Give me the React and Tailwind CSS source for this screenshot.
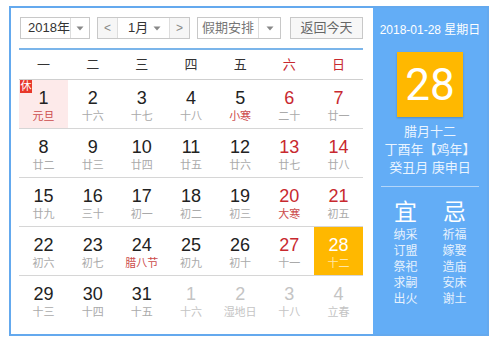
import React from "react";

const rows = [
  [
    { d: 1, l: "元旦", hol: true, rest: true },
    { d: 2, l: "十六" },
    { d: 3, l: "十七" },
    { d: 4, l: "十八" },
    { d: 5, l: "小寒", hol: true },
    { d: 6, l: "二十", we: true },
    { d: 7, l: "廿一", we: true },
  ],
  [
    { d: 8, l: "廿二" },
    { d: 9, l: "廿三" },
    { d: 10, l: "廿四" },
    { d: 11, l: "廿五" },
    { d: 12, l: "廿六" },
    { d: 13, l: "廿七", we: true },
    { d: 14, l: "廿八", we: true },
  ],
  [
    { d: 15, l: "廿九" },
    { d: 16, l: "三十" },
    { d: 17, l: "初一" },
    { d: 18, l: "初二" },
    { d: 19, l: "初三" },
    { d: 20, l: "大寒", we: true, hol: true },
    { d: 21, l: "初五", we: true },
  ],
  [
    { d: 22, l: "初六" },
    { d: 23, l: "初七" },
    { d: 24, l: "腊八节", hol: true },
    { d: 25, l: "初九" },
    { d: 26, l: "初十" },
    { d: 27, l: "十一", we: true },
    { d: 28, l: "十二", sel: true },
  ],
  [
    { d: 29, l: "十三" },
    { d: 30, l: "十四" },
    { d: 31, l: "十五" },
    { d: 1, l: "十六", other: true },
    { d: 2, l: "湿地日", other: true },
    { d: 3, l: "十八", other: true },
    { d: 4, l: "立春", other: true },
  ],
];

const weekdays = ["一", "二", "三", "四", "五", "六", "日"];

function Arrow() {
  return (
    <svg width="8" height="5" viewBox="0 0 8 5">
      <path d="M0.5 0.5 L7.5 0.5 L4 4.5 Z" fill="#888" />
    </svg>
  );
}

function Cell({ c }) {
  let bg = "";
  let num = "text-[#222]";
  let lun = "text-[#aaa]";
  if (c.we) num = "text-[#c8292f]";
  if (c.hol) lun = "text-[#cc4b4b]";
  if (c.rest) bg = "bg-[#fdeaea]";
  if (c.other) {
    num = "text-[#c4c4c4]";
    lun = "text-[#c4c4c4]";
  }
  if (c.sel) {
    bg = "bg-[#ffb800]";
    num = "text-white";
    lun = "text-[#ffe7a6]";
  }
  return (
    <div className={`relative flex flex-col items-center pt-[8px] h-full ${bg}`}>
      {c.rest && (
        <div className="absolute left-[1px] top-0 w-[12px] h-[13px] bg-[#e8382b] text-white text-[11px] leading-[13px] flex items-center justify-center">
          休
        </div>
      )}
      <div className={`text-[18px] leading-[20px] ${num}`} style={{ fontFamily: '"Liberation Sans", Arial, sans-serif' }}>
        {c.d}
      </div>
      <div className={`text-[11px] leading-[15px] mt-[1px] ${lun}`}>{c.l}</div>
    </div>
  );
}

export default function App() {
  return (
    <div
      className="w-[500px] h-[346px] bg-white pt-[6px] pl-[9px]"
      style={{ fontFamily: '"Liberation Sans", "Noto Sans CJK SC", sans-serif' }}
    >
      <div className="w-[480px] h-[330px] border-2 border-[#64a9ee] flex">
        {/* left */}
        <div className="w-[362px] pl-[8px] pt-[9px] flex flex-col">
          {/* toolbar */}
          <div className="flex items-center h-[22px] text-[13px] text-[#333]">
            <div className="ml-[1px] w-[70px] h-[22px] border border-[#c8c8c8] flex items-center">
              <div className="w-[50px] pl-[7px] border-r border-[#ddd] h-full flex items-center">2018年</div>
              <div className="flex-1 flex items-center justify-center">
                <Arrow />
              </div>
            </div>
            <div className="ml-[7px] w-[93px] h-[22px] border border-[#c8c8c8] flex items-center">
              <div className="w-[20px] h-full bg-[#f6f6f6] border-r border-[#ddd] flex items-center justify-center text-[#888] text-[12px]">
                &lt;
              </div>
              <div className="flex-1 h-full flex items-center pl-[10px] pr-[8px] justify-between">
                <span>1月</span>
                <Arrow />
              </div>
              <div className="w-[20px] h-full bg-[#f6f6f6] border-l border-[#ddd] flex items-center justify-center text-[#888] text-[12px]">
                &gt;
              </div>
            </div>
            <div className="ml-[7px] w-[84px] h-[22px] border border-[#c8c8c8] flex items-center">
              <div className="w-[61px] h-full border-r border-[#ddd] flex items-center justify-center text-[#777]">假期安排</div>
              <div className="flex-1 flex items-center justify-center">
                <Arrow />
              </div>
            </div>
            <div className="ml-[9px] w-[73px] h-[22px] border border-[#c8c8c8] bg-[#f7f7f7] flex items-center justify-center text-[#666]">
              返回今天
            </div>
          </div>
          <div className="mt-[9px] h-[2px] w-[344px] bg-[#7bb5ea]" />
          {/* weekday header */}
          <div className="w-[344px] grid grid-cols-7 h-[30px] border-b border-[#cfcfcf] items-center text-[13px]">
            {weekdays.map((w, i) => (
              <div key={i} className={`text-center ${i >= 5 ? "text-[#c8292f]" : "text-[#333]"}`}>
                {w}
              </div>
            ))}
          </div>
          {rows.map((r, ri) => (
            <div
              key={ri}
              className={`w-[344px] grid grid-cols-7 h-[49px] ${ri < 4 ? "border-b border-[#d6d6d6]" : ""}`}
            >
              {r.map((c, ci) => (
                <Cell key={ci} c={c} />
              ))}
            </div>
          ))}
        </div>
        {/* right panel */}
        <div className="flex-1 bg-[#63adf6] flex flex-col items-center text-white">
          <div className="mt-[14px] text-[12px] leading-[16px]">2018-01-28 星期日</div>
          <div className="mt-[14px] w-[66px] h-[65px] bg-[#ffb800] flex items-center justify-center shadow-[0_1px_2px_rgba(0,0,0,0.2)]">
            <span className="text-[44px] leading-none" style={{ fontFamily: 'Roboto, "Liberation Sans", sans-serif' }}>
              28
            </span>
          </div>
          <div className="mt-[6px] text-[13px] leading-[18px] text-[#eaf4ff] text-center">
            <div>腊月十二</div>
            <div>丁酉年【鸡年】</div>
            <div>癸丑月 庚申日</div>
          </div>
          <div className="mt-[9px] w-[98px] h-px bg-[#b3d6fa]" />
          <div className="mt-[12px] flex gap-[25px]">
            <div className="flex flex-col items-center w-[24px]">
              <div className="text-[23px] leading-[26px]">宜</div>
              <div className="mt-[2px] text-[12px] leading-[16px] text-[#e6f1fd] flex flex-col items-center">
                <span>纳采</span>
                <span>订盟</span>
                <span>祭祀</span>
                <span>求嗣</span>
                <span>出火</span>
              </div>
            </div>
            <div className="flex flex-col items-center w-[24px]">
              <div className="text-[23px] leading-[26px]">忌</div>
              <div className="mt-[2px] text-[12px] leading-[16px] text-[#e6f1fd] flex flex-col items-center">
                <span>祈福</span>
                <span>嫁娶</span>
                <span>造庙</span>
                <span>安床</span>
                <span>谢土</span>
              </div>
            </div>
          </div>
        </div>
      </div>
    </div>
  );
}
